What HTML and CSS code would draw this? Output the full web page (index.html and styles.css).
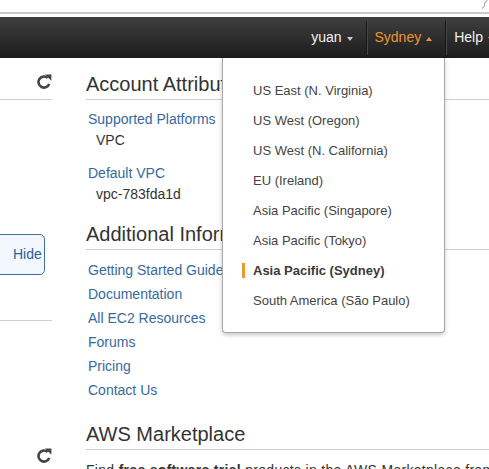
FILE: index.html
```html
<!DOCTYPE html>
<html>
<head>
<meta charset="utf-8">
<link rel="stylesheet" href="styles.css">
</head>
<body>
<div class="chrome">
  <svg class="squiggle" width="8" height="10" viewBox="0 0 8 10"><path d="M6.5 0.5C5 1.5 3 2.5 3.5 4.5C4 6 2.5 7.5 1 8.5" stroke="#8a8a8a" stroke-width="1" fill="none"/></svg>
</div>
<nav class="topnav">
  <div class="nav-item">yuan<span class="caret-down"></span></div>
  <div class="nav-sep"></div>
  <div class="nav-item active">Sydney<span class="caret-up"></span></div>
  <div class="nav-sep"></div>
  <div class="nav-item help">Help<span class="caret-down"></span></div>
</nav>
<div class="page">
  <div class="side">
    <div class="side-head">
      <svg class="refresh" width="16" height="16" viewBox="0 0 16 16"><path d="M13.2 10.9A5.5 5.5 0 1 1 11.6 4.9" stroke="#444" stroke-width="2.6" fill="none"/><path d="M9 1.4L15.4 1.4L15.4 7.8Z" fill="#444"/></svg>
    </div>
    <div class="hide-btn">Hide</div>
    <div class="side-line"></div>
    <svg class="refresh bottom" width="16" height="16" viewBox="0 0 16 16"><path d="M13.2 10.9A5.5 5.5 0 1 1 11.6 4.9" stroke="#444" stroke-width="2.6" fill="none"/><path d="M9 1.4L15.4 1.4L15.4 7.8Z" fill="#444"/></svg>
  </div>
  <div class="main">
    <h2 class="sec-title">Account Attributes</h2>
    <dl class="attrs">
      <dt><a class="link">Supported Platforms</a></dt>
      <dd>VPC</dd>
      <dt class="next"><a class="link">Default VPC</a></dt>
      <dd>vpc-783fda1d</dd>
    </dl>
    <h2 class="sec-title">Additional Information</h2>
    <ul class="links">
      <li><a class="link">Getting Started Guide</a></li>
      <li><a class="link">Documentation</a></li>
      <li><a class="link">All EC2 Resources</a></li>
      <li><a class="link">Forums</a></li>
      <li><a class="link">Pricing</a></li>
      <li><a class="link">Contact Us</a></li>
    </ul>
    <h2 class="sec-title market">AWS Marketplace</h2>
    <p class="market-text">Find <b>free software trial</b> products in the AWS Marketplace from the</p>
  </div>
</div>
<div class="region-menu">
  <ul>
    <li>US East (N. Virginia)</li>
    <li>US West (Oregon)</li>
    <li>US West (N. California)</li>
    <li>EU (Ireland)</li>
    <li>Asia Pacific (Singapore)</li>
    <li>Asia Pacific (Tokyo)</li>
    <li class="selected">Asia Pacific (Sydney)</li>
    <li>South America (São Paulo)</li>
  </ul>
</div>
</body>
</html>
```
FILE: styles.css
```css
html, body {
  margin: 0;
  padding: 0;
}
body {
  width: 489px;
  height: 469px;
  overflow: hidden;
  position: relative;
  background: #fff;
  font-family: "Liberation Sans", Arial, sans-serif;
  color: #333;
}
.chrome {
  height: 12px;
  border-bottom: 2px solid #cbcbcb;
  margin-bottom: 3px;
  display: flex;
  justify-content: flex-end;
  align-items: flex-start;
}
.squiggle {
  display: block;
}
.topnav {
  height: 41px;
  display: flex;
  justify-content: flex-end;
  align-items: center;
  background: linear-gradient(#3f3f3f, #1c1c1c);
  overflow: hidden;
}
.nav-item {
  display: flex;
  align-items: center;
  gap: 5px;
  padding: 0 13px 0 8px;
  font-size: 14px;
  line-height: 41px;
  color: #f2f2f2;
  white-space: nowrap;
  flex: none;
}
.nav-item.active {
  color: #ec962c;
}
.nav-item.help {
  margin-right: -18px;
}
.nav-sep {
  width: 1px;
  height: 34px;
  background: #151515;
  box-shadow: 1px 0 0 #474747;
  flex: none;
}
.caret-down {
  width: 0;
  height: 0;
  border-left: 3px solid transparent;
  border-right: 3px solid transparent;
  border-top: 4px solid #c8c8c8;
  margin-top: 3px;
}
.caret-up {
  width: 0;
  height: 0;
  border-left: 3.5px solid transparent;
  border-right: 3.5px solid transparent;
  border-bottom: 4px solid #ec962c;
  margin-top: 2px;
}
.page {
  display: flex;
  align-items: flex-start;
}
.side {
  width: 52px;
  flex: none;
  display: flex;
  flex-direction: column;
  align-items: flex-end;
}
.side-head {
  width: 52px;
  height: 41px;
  border-bottom: 1px solid #cfcfcf;
  display: flex;
  justify-content: flex-end;
  align-items: flex-start;
}
.side-head .refresh {
  margin-top: 15px;
}
.refresh {
  display: block;
}
.hide-btn {
  align-self: flex-start;
  margin-left: -16px;
  margin-top: 134px;
  width: 59px;
  height: 39px;
  box-sizing: content-box;
  border: 1px solid #3f6f9f;
  border-radius: 5px;
  background: #f1f7fd;
  color: #2f5f92;
  font-size: 14px;
  line-height: 39px;
  text-indent: 28px;
}
.side-line {
  width: 52px;
  height: 1px;
  background: #cfcfcf;
  margin-top: 45px;
}
.refresh.bottom {
  margin-top: 126px;
}
.main {
  margin-left: 34px;
  flex: 1;
  min-width: 0;
  padding-top: 14px;
}
.sec-title {
  margin: 0;
  font-size: 20px;
  font-weight: normal;
  line-height: 24px;
  padding-bottom: 3px;
  border-bottom: 1px solid #cfcfcf;
  color: #333;
  white-space: nowrap;
}
.link {
  color: #36699f;
  text-decoration: none;
}
.attrs {
  margin: 10px 0 0 0;
  padding-left: 2px;
  font-size: 14px;
  line-height: 18px;
}
.attrs dt {
  margin: 0;
}
.attrs dt.next {
  margin-top: 15px;
}
.attrs dd {
  margin: 3px 0 0 8px;
  color: #333;
}
.attrs + .sec-title {
  margin-top: 19px;
}
.links {
  list-style: none;
  margin: 8px 0 0 0;
  padding: 0 0 0 2px;
  font-size: 14px;
  line-height: 24px;
}
.sec-title.market {
  margin-top: 20px;
}
.market-text {
  margin: 11px 0 0 0;
  font-size: 14px;
  line-height: 18px;
  letter-spacing: 0.3px;
  white-space: nowrap;
  color: #333;
}
.region-menu {
  position: absolute;
  left: 222px;
  top: 58px;
  width: 221px;
  background: #fff;
  border: 1px solid #a9a9a9;
  border-top: none;
  border-radius: 0 0 4px 4px;
  box-shadow: 0 2px 4px rgba(0, 0, 0, 0.22);
  z-index: 5;
}
.region-menu ul {
  list-style: none;
  margin: 0;
  padding: 18px 0 16px 30px;
  font-size: 13px;
  line-height: 30px;
  color: #444;
}
.region-menu li {
  position: relative;
  white-space: nowrap;
}
.region-menu li.selected {
  font-weight: bold;
  color: #3a3a3a;
}
.region-menu li.selected::before {
  content: "";
  position: absolute;
  left: -11px;
  top: 7px;
  width: 3px;
  height: 15px;
  background: #f0962a;
}
```
